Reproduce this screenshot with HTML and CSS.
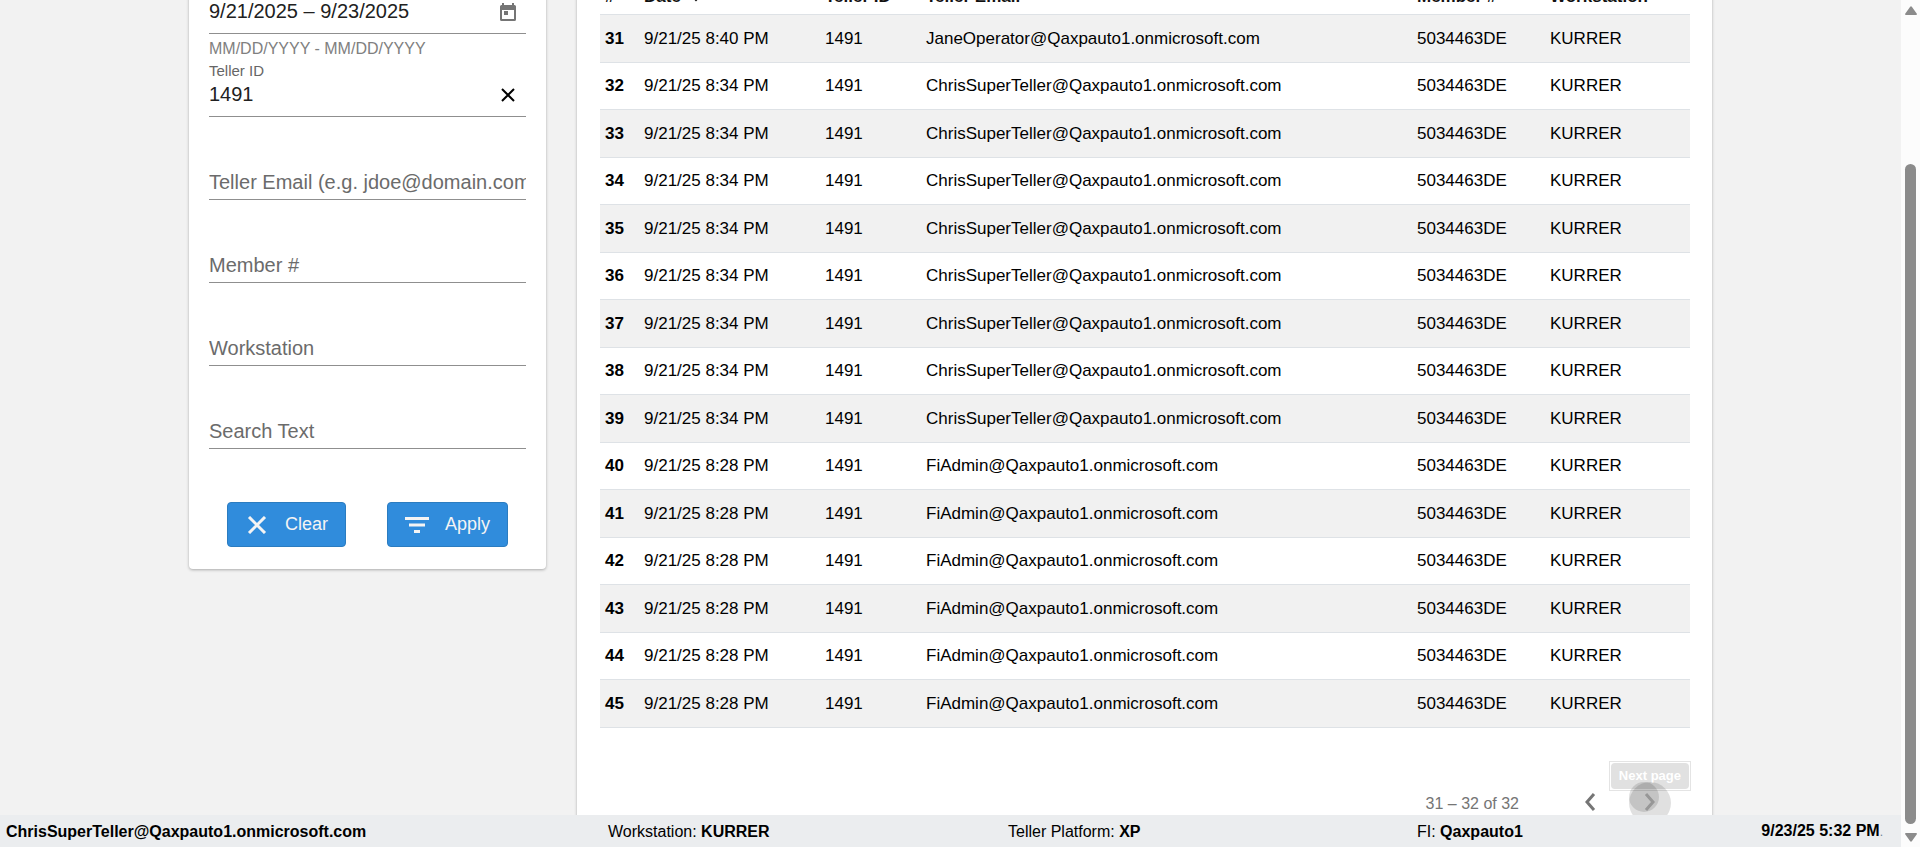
FILE: index.html
```html
<!DOCTYPE html>
<html lang="en">
<head>
    <meta charset="UTF-8">
    <meta name="viewport" content="width=device-width, initial-scale=1">
    <title>Teller Activity</title>
    <link rel="stylesheet" href="styles.css">
</head>
<body>
    <div class="app">
        <main class="main">
            <div class="workspace">
                <form class="card filters">
                    <div class="field">
                        <div class="control filled">
                            <input type="text" id="dates" aria-label="Date range" value="9/21/2025 – 9/23/2025">
                            <button type="button" class="icon-button" aria-label="Open calendar">
                                <svg class="calendar" viewBox="0 0 16 18"><path fill-rule="evenodd" d="M2 0h2v2h8V0h2v2h.5A1.5 1.5 0 0 1 16 3.5v13a1.500 1.500 0 0 1-1.500 1.500h-13A1.500 1.500 0 0 1 0 16.500v-13A1.500 1.500 0 0 1 1.500 2H2zM2 7v9h12V7zM4 8h4v4H4z"/></svg>
                            </button>
                        </div>
                    </div>
                    <div class="field">
                        <div class="hint">MM/DD/YYYY - MM/DD/YYYY</div>
                        <label for="teller">Teller ID</label>
                        <div class="control filled">
                            <input type="text" id="teller" value="1491">
                            <button type="button" class="icon-button" aria-label="Clear teller ID">
                                <svg class="cross" viewBox="0 0 12 12"><path d="M0 0l12 12M12 0L0 12"/></svg>
                            </button>
                        </div>
                    </div>
                    <div class="field">
                        <div class="control"><input type="text" aria-label="Teller Email" placeholder="Teller Email (e.g. jdoe@domain.com)"></div>
                    </div>
                    <div class="field">
                        <div class="control"><input type="text" aria-label="Member #" placeholder="Member #"></div>
                    </div>
                    <div class="field">
                        <div class="control"><input type="text" aria-label="Workstation" placeholder="Workstation"></div>
                    </div>
                    <div class="field">
                        <div class="control"><input type="text" aria-label="Search Text" placeholder="Search Text"></div>
                    </div>
                    <div class="actions">
                        <button type="reset" class="btn">
                            <svg class="btn-cross" viewBox="0 0 18 18"><path d="M1 1l16 16M17 1L1 17"/></svg>
                            Clear
                        </button>
                        <button type="button" class="btn">
                            <svg class="btn-filter" viewBox="0 0 24 16"><path d="M0 0h24v3H0zM4 6.500h16v3H4zM9 13h6v3H9z"/></svg>
                            Apply
                        </button>
                    </div>
                </form>

                <section class="card results">
                    <table>
                        <thead>
                            <tr>
                                <th class="col-num">#</th>
                                <th class="col-date">Date <svg class="sort" viewBox="0 0 12 12"><path d="M6 0v10M1 5l5 5 5-5"/></svg></th>
                                <th class="col-teller">Teller ID</th>
                                <th>Teller Email</th>
                                <th class="col-member">Member #</th>
                                <th class="col-station">Workstation</th>
                            </tr>
                        </thead>
                        <tbody>
                            <tr><th>31</th><td>9/21/25 8:40 PM</td><td>1491</td><td>JaneOperator@Qaxpauto1.onmicrosoft.com</td><td>5034463DE</td><td>KURRER</td></tr>
                            <tr><th>32</th><td>9/21/25 8:34 PM</td><td>1491</td><td>ChrisSuperTeller@Qaxpauto1.onmicrosoft.com</td><td>5034463DE</td><td>KURRER</td></tr>
                            <tr><th>33</th><td>9/21/25 8:34 PM</td><td>1491</td><td>ChrisSuperTeller@Qaxpauto1.onmicrosoft.com</td><td>5034463DE</td><td>KURRER</td></tr>
                            <tr><th>34</th><td>9/21/25 8:34 PM</td><td>1491</td><td>ChrisSuperTeller@Qaxpauto1.onmicrosoft.com</td><td>5034463DE</td><td>KURRER</td></tr>
                            <tr><th>35</th><td>9/21/25 8:34 PM</td><td>1491</td><td>ChrisSuperTeller@Qaxpauto1.onmicrosoft.com</td><td>5034463DE</td><td>KURRER</td></tr>
                            <tr><th>36</th><td>9/21/25 8:34 PM</td><td>1491</td><td>ChrisSuperTeller@Qaxpauto1.onmicrosoft.com</td><td>5034463DE</td><td>KURRER</td></tr>
                            <tr><th>37</th><td>9/21/25 8:34 PM</td><td>1491</td><td>ChrisSuperTeller@Qaxpauto1.onmicrosoft.com</td><td>5034463DE</td><td>KURRER</td></tr>
                            <tr><th>38</th><td>9/21/25 8:34 PM</td><td>1491</td><td>ChrisSuperTeller@Qaxpauto1.onmicrosoft.com</td><td>5034463DE</td><td>KURRER</td></tr>
                            <tr><th>39</th><td>9/21/25 8:34 PM</td><td>1491</td><td>ChrisSuperTeller@Qaxpauto1.onmicrosoft.com</td><td>5034463DE</td><td>KURRER</td></tr>
                            <tr><th>40</th><td>9/21/25 8:28 PM</td><td>1491</td><td>FiAdmin@Qaxpauto1.onmicrosoft.com</td><td>5034463DE</td><td>KURRER</td></tr>
                            <tr><th>41</th><td>9/21/25 8:28 PM</td><td>1491</td><td>FiAdmin@Qaxpauto1.onmicrosoft.com</td><td>5034463DE</td><td>KURRER</td></tr>
                            <tr><th>42</th><td>9/21/25 8:28 PM</td><td>1491</td><td>FiAdmin@Qaxpauto1.onmicrosoft.com</td><td>5034463DE</td><td>KURRER</td></tr>
                            <tr><th>43</th><td>9/21/25 8:28 PM</td><td>1491</td><td>FiAdmin@Qaxpauto1.onmicrosoft.com</td><td>5034463DE</td><td>KURRER</td></tr>
                            <tr><th>44</th><td>9/21/25 8:28 PM</td><td>1491</td><td>FiAdmin@Qaxpauto1.onmicrosoft.com</td><td>5034463DE</td><td>KURRER</td></tr>
                            <tr><th>45</th><td>9/21/25 8:28 PM</td><td>1491</td><td>FiAdmin@Qaxpauto1.onmicrosoft.com</td><td>5034463DE</td><td>KURRER</td></tr>
                        </tbody>
                    </table>
                    <nav class="pager">
                        <span class="range">31 – 32 of 32</span>
                        <button type="button" class="page-button" aria-label="Previous page">
                            <svg viewBox="0 0 10 16"><path d="M9 0L2 8l7 8"/></svg>
                        </button>
                        <button type="button" class="page-button next" aria-label="Next page">
                            <svg viewBox="0 0 10 16"><path d="M1 0l7 8-7 8"/></svg>
                            <span class="tooltip"><span>Next page</span></span>
                            <span class="focus-ring"></span>
                            <span class="ripple"></span>
                        </button>
                    </nav>
                </section>
            </div>
        </main>
        <footer class="status">
            <span><b>ChrisSuperTeller@Qaxpauto1.onmicrosoft.com</b></span>
            <span>Workstation: <b>KURRER</b></span>
            <span>Teller Platform: <b>XP</b></span>
            <span>FI: <b>Qaxpauto1</b></span>
            <span class="clock"><b>9/23/25 5:32 PM</b><small>.</small></span>
        </footer>
    </div>
    <div class="scrollbar">
        <svg viewBox="0 0 12 9"><path d="M5 1q1-1.500 2 0l5 7q0 1-1 1H1q-1 0-1-1z"/></svg>
        <div class="thumb"></div>
        <svg viewBox="0 0 12 9"><path d="M5 8q1 1.500 2 0l5-7q0-1-1-1H1Q0 0 0 1z"/></svg>
    </div>
</body>
</html>
```
FILE: styles.css
```css
* {
    box-sizing: border-box;
}
body {
    margin: 0;
    display: flex;
    height: 100vh;
    overflow: hidden;
    background-color: #f2f2f2;
    color: #000;
    font-family: Arial, "Liberation Sans", sans-serif;
    font-size: 17px;
    line-height: 24px;
}
button, input {
    font-family: inherit;
    border: none;
    background: none;
    padding: 0;
    margin: 0;
}
button {
    cursor: pointer;
}
svg {
    display: block;
    fill: none;
}
.app {
    flex: 1;
    min-width: 0;
    display: flex;
    flex-direction: column;
}
.main {
    flex: 1;
    min-height: 0;
    overflow: hidden;
}
/* the list is scrolled down to its last rows */
.workspace {
    display: grid;
    grid-template-columns: 357px 1fr;
    gap: 31px;
    align-items: start;
    max-width: 1523px;
    margin: -50px auto 0;
}
.card {
    background-color: #fff;
    border-radius: 4px;
    box-shadow: 0 1px 3px rgba(0, 0, 0, 0.3);
}

/* filters */
.filters {
    padding: 0 20px 22px;
}
.field {
    height: 83px;
    display: flex;
    flex-direction: column;
    justify-content: flex-end;
}
.field:first-child {
    height: 84px;
}
.hint, .field label {
    font-size: 16px;
    line-height: 24px;
    color: #808080;
}
.field label {
    font-size: 15px;
    line-height: 20px;
    color: #666;
}
.control {
    display: flex;
    flex-shrink: 0;
    align-items: center;
    height: 35px;
    border-bottom: 1px solid #8f8f8f;
}
.filled {
    height: 44px;
}
.field label + .filled {
    height: 36px;
    padding-bottom: 8px;
}
.control input {
    flex: 1;
    min-width: 0;
    height: 28px;
    font-size: 20px;
    color: #212121;
    outline: none;
}
.control input::placeholder {
    color: #6b6b6b;
    opacity: 1;
}
.icon-button {
    width: 36px;
    height: 28px;
    display: flex;
    align-items: center;
    justify-content: center;
}
.calendar {
    width: 16px;
    height: 18px;
    fill: #757575;
}
.cross {
    width: 12px;
    height: 12px;
    overflow: visible;
    stroke: #000;
    stroke-width: 2;
}
.actions {
    display: flex;
    justify-content: center;
    gap: 41px;
    padding-top: 53px;
}
.btn {
    display: flex;
    align-items: center;
    height: 45px;
    gap: 16px;
    padding: 0 17px;
    border: 1px solid #2b7cc0;
    border-radius: 4px;
    background-color: #308cdc;
    color: #f4f4f4;
    font-size: 18px;
}
.btn-cross {
    width: 24px;
    height: 18px;
    stroke: #f4f4f4;
    stroke-width: 3;
}
.btn-filter {
    width: 24px;
    height: 16px;
    fill: #f4f4f4;
}

/* results */
.results {
    padding: 0 22px 0 23px;
}
table {
    width: 100%;
    table-layout: fixed;
    border-collapse: separate;
    border-spacing: 0;
}
th, td {
    padding: 0 5px;
    height: 47px;
    text-align: left;
    white-space: nowrap;
    border-bottom: 1px solid #dee2e6;
}
thead th {
    height: 65px;
    padding-bottom: 5px;
    vertical-align: bottom;
    color: #111;
}
tbody tr:nth-child(odd) > * {
    height: 48px;
    background-color: #f1f1f1;
}
.col-num {
    width: 39px;
}
.col-date {
    width: 181px;
}
.col-teller {
    width: 101px;
}
.col-member {
    width: 133px;
}
.col-station {
    width: 145px;
}
.sort {
    display: inline-block;
    width: 12px;
    height: 12px;
    margin-left: 4px;
    stroke: #111;
    stroke-width: 2;
}
.pager {
    display: flex;
    align-items: center;
    justify-content: flex-end;
    padding: 44px 10px 0 0;
}
.range {
    margin-right: 41px;
    padding-top: 4px;
    font-size: 16px;
    color: #757575;
}
.page-button {
    position: relative;
    width: 60px;
    height: 60px;
    display: flex;
    align-items: center;
    justify-content: center;
}
.page-button svg {
    width: 10px;
    height: 16px;
    overflow: visible;
    stroke: #757575;
    stroke-width: 3;
}
.next svg {
    stroke: #c4c4c4;
}
.focus-ring, .ripple {
    position: absolute;
    border-radius: 50%;
    background-color: rgba(0, 0, 0, 0.12);
}
.focus-ring {
    top: 10px;
    left: 9px;
    width: 42px;
    height: 42px;
}
.ripple {
    top: 10px;
    left: 9px;
    width: 30px;
    height: 30px;
    background-color: rgba(0, 0, 0, 0.12);
}
.tooltip {
    position: absolute;
    right: -11px;
    bottom: 41px;
    padding: 1px;
    border: 1px solid #e4e4e4;
    background-color: #fff;
}
.tooltip span {
    display: block;
    padding: 0 8px;
    border-radius: 4px;
    background-color: #e1e1e1;
    color: #fff;
    font-size: 13px;
    font-weight: bold;
    line-height: 26px;
    white-space: nowrap;
}

/* status bar */
.status {
    display: grid;
    grid-template-columns: 602fr 400fr 409fr 250fr 216fr;
    align-items: center;
    height: 32px;
    padding: 1px 18px 0 6px;
    background-color: #ebedef;
    font-size: 16px;
    white-space: nowrap;
}
.clock {
    text-align: right;
}
.clock small {
    font-size: 12px;
    color: #6a8296;
}

/* scrollbar */
.scrollbar {
    width: 19px;
    display: flex;
    flex-direction: column;
    align-items: center;
    padding: 6px 0 5px;
    background-color: #fcfcfc;
}
.scrollbar svg {
    width: 12px;
    height: 9px;
    fill: #8b8b8b;
}
.thumb {
    flex: 1;
    width: 11px;
    margin: 149px 0 9px;
    border-radius: 6px;
    background-color: #8b8b8b;
}
```
